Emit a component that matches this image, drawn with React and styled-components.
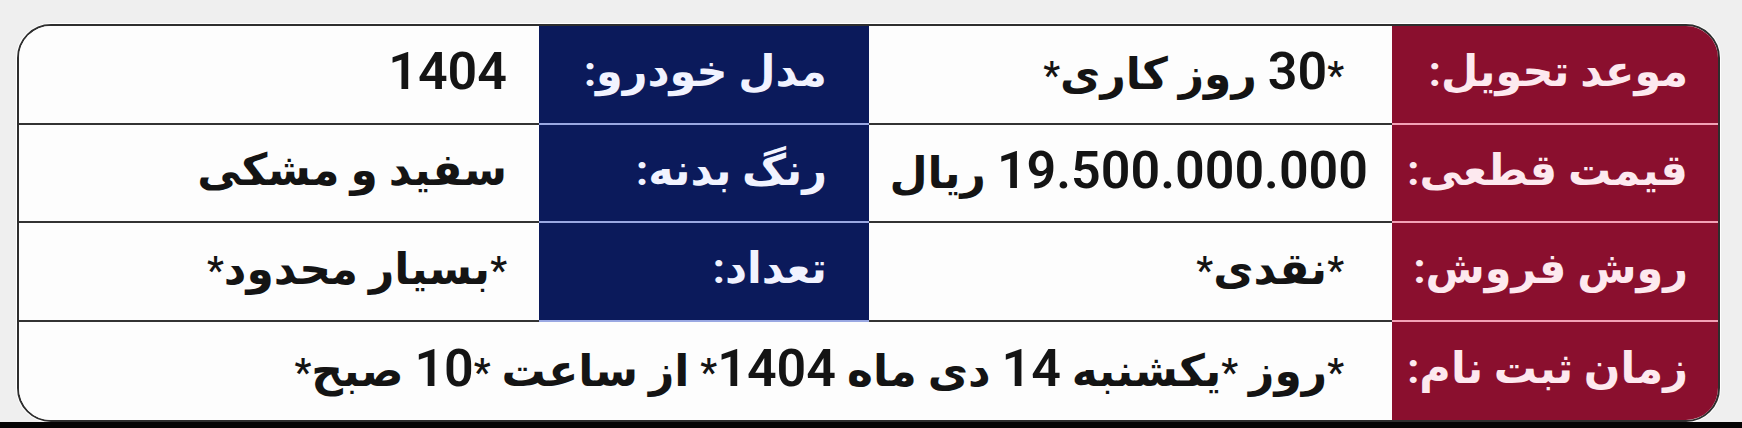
import React from 'react';
import styled, { createGlobalStyle } from 'styled-components';

const GlobalStyle = createGlobalStyle`
  html, body {
    margin: 0;
    padding: 0;
    background: #efefef;
  }
`;

const Page = styled.div`
  width: 1742px;
  height: 428px;
  background: #efefef;
  display: flex;
  flex-direction: column;
  overflow: hidden;
  font-family: "Roboto", "DejaVu Sans", sans-serif;
`;

const Stage = styled.div`
  flex: 1;
  padding: 24px 22px 0 17px;
  box-sizing: border-box;
`;

const Table = styled.div`
  direction: rtl;
  box-sizing: border-box;
  width: 1703px;
  height: 398px;
  border: 2px solid #2e2e2e;
  border-radius: 34px;
  overflow: hidden;
  background: #fdfdfd;
  display: grid;
  grid-template-columns: 326px 523px 330px 1fr;
  grid-template-rows: repeat(4, 1fr);
  box-shadow: 0 0 0 1px #ffffff;
`;

const tones = {
  crimson: { bg: '#8a0f2e', fg: '#fde9ef', line: '#f2a2b6' },
  navy: { bg: '#0b1a5b', fg: '#f1f3ff', line: '#9aa8e2' },
  plain: { bg: '#fdfdfd', fg: '#141414', line: '#333333' },
};

const Cell = styled.div`
  display: flex;
  align-items: center;
  justify-content: flex-start;
  box-sizing: border-box;
  padding: 0 ${(p) => p.$pad}px 4px 12px;
  background: ${(p) => tones[p.$tone].bg};
  color: ${(p) => tones[p.$tone].fg};
  border-bottom: ${(p) => (p.$last ? 'none' : `2px solid ${tones[p.$tone].line}`)};
  grid-column: ${(p) => (p.$span ? `span ${p.$span}` : 'auto')};
  font-size: ${(p) => (p.$tone === 'plain' ? 44 : 43)}px;
  font-weight: 700;
  white-space: nowrap;
`;

const Text = styled.span`
  display: inline-block;
  line-height: 1.2;
`;

const Num = styled.span`
  font-family: "Roboto", sans-serif;
  font-size: 52px;
  font-weight: 600;
`;

const Star = styled.span`
  font-family: "Roboto", sans-serif;
  font-size: 38px;
  font-weight: 500;
`;

const Footer = styled.div`
  height: 6px;
  background: #050505;
`;

// wrap digit runs and asterisks so they get their own sizes
function rich(text) {
  return text.split(/(\d[\d.]*|\*)/).map((part, i) => {
    if (!part) return null;
    if (part === '*') return <Star key={i}>*</Star>;
    if (/^\d/.test(part)) return <Num key={i}>{part}</Num>;
    return <React.Fragment key={i}>{part}</React.Fragment>;
  });
}

const rows = [
  ['موعد تحویل:', '*30 روز کاری*', 'مدل خودرو:', '1404'],
  ['قیمت قطعی:', '19.500.000.000 ریال', 'رنگ بدنه:', 'سفید و مشکی'],
  ['روش فروش:', '*نقدی*', 'تعداد:', '*بسیار محدود*'],
];

export default function App() {
  return (
    <Page>
      <GlobalStyle />
      <Stage>
        <Table>
          {rows.map((r, i) => (
            <React.Fragment key={i}>
              <Cell $tone="crimson" $pad={30}><Text>{r[0]}</Text></Cell>
              <Cell $tone="plain" $pad={i === 1 ? 24 : 48}><Text>{rich(r[1])}</Text></Cell>
              <Cell $tone="navy" $pad={42}><Text>{r[2]}</Text></Cell>
              <Cell $tone="plain" $pad={32}><Text>{rich(r[3])}</Text></Cell>
            </React.Fragment>
          ))}
          <Cell $tone="crimson" $pad={30} $last><Text>زمان ثبت نام:</Text></Cell>
          <Cell $tone="plain" $pad={48} $span={3} $last>
            <Text>{rich('*روز *یکشنبه 14 دی ماه 1404* از ساعت *10 صبح*')}</Text>
          </Cell>
        </Table>
      </Stage>
      <Footer />
    </Page>
  );
}
